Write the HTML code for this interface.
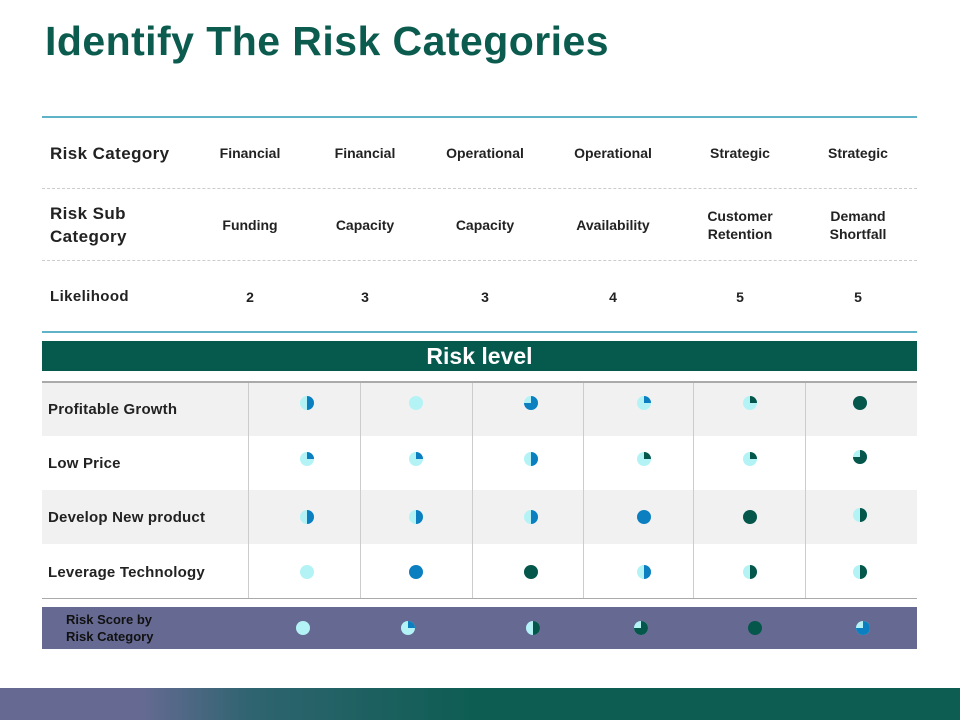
<!DOCTYPE html><html><head><style>
body{margin:0;width:960px;height:720px;position:relative;background:#fff;font-family:"Liberation Sans",sans-serif;overflow:hidden}
.a{position:absolute}
h1{position:absolute;left:45px;top:18px;margin:0;font-size:41px;color:#0b5c4f;font-weight:bold;letter-spacing:0.45px}
.hl{left:42px;width:875px}
.t{font-weight:bold;font-size:14px;color:#222;text-align:center;transform:translateX(-50%);white-space:nowrap;line-height:18px}
.lb{font-weight:bold;font-size:17px;color:#222;left:50px;line-height:23px;letter-spacing:0.4px}
.rl{font-weight:bold;font-size:15px;color:#222;left:48px;letter-spacing:0.2px}
</style></head><body>
<h1>Identify The Risk Categories</h1>
<div class="a hl" style="top:116px;height:2px;background:#5fb3c6"></div>
<div class="a hl" style="top:188px;border-top:1px dashed #ccc"></div>
<div class="a hl" style="top:260px;border-top:1px dashed #ccc"></div>
<div class="a hl" style="top:331px;height:2px;background:#5fb3c6"></div>
<div class="a lb" style="top:142px">Risk Category</div>
<div class="a lb" style="top:202px">Risk Sub<br>Category</div>
<div class="a lb" style="top:285px;font-size:15px">Likelihood</div>
<div class="a t" style="left:250px;top:144px">Financial</div>
<div class="a t" style="left:365px;top:144px">Financial</div>
<div class="a t" style="left:485px;top:144px">Operational</div>
<div class="a t" style="left:613px;top:144px">Operational</div>
<div class="a t" style="left:740px;top:144px">Strategic</div>
<div class="a t" style="left:858px;top:144px">Strategic</div>
<div class="a t" style="left:250px;top:216px">Funding</div>
<div class="a t" style="left:365px;top:216px">Capacity</div>
<div class="a t" style="left:485px;top:216px">Capacity</div>
<div class="a t" style="left:613px;top:216px">Availability</div>
<div class="a t" style="left:740px;top:207px">Customer<br>Retention</div>
<div class="a t" style="left:858px;top:207px">Demand<br>Shortfall</div>
<div class="a t" style="left:250px;top:288px">2</div>
<div class="a t" style="left:365px;top:288px">3</div>
<div class="a t" style="left:485px;top:288px">3</div>
<div class="a t" style="left:613px;top:288px">4</div>
<div class="a t" style="left:740px;top:288px">5</div>
<div class="a t" style="left:858px;top:288px">5</div>
<div class="a" style="left:42px;top:341px;width:875px;height:30px;background:#05594d;color:#fff;font-weight:bold;font-size:23px;text-align:center;line-height:31px">Risk level</div>
<div class="a hl" style="top:381px;height:2px;background:#aaa"></div>
<div class="a hl" style="top:383px;height:53px;background:#f1f1f1"></div>
<div class="a hl" style="top:490px;height:54px;background:#f1f1f1"></div>
<div class="a hl" style="top:598px;height:1px;background:#aaa"></div>
<div class="a" style="left:248px;top:383px;width:1px;height:215px;background:#ccc"></div>
<div class="a" style="left:360px;top:383px;width:1px;height:215px;background:#ccc"></div>
<div class="a" style="left:472px;top:383px;width:1px;height:215px;background:#ccc"></div>
<div class="a" style="left:583px;top:383px;width:1px;height:215px;background:#ccc"></div>
<div class="a" style="left:693px;top:383px;width:1px;height:215px;background:#ccc"></div>
<div class="a" style="left:805px;top:383px;width:1px;height:215px;background:#ccc"></div>
<div class="a rl" style="top:401px">Profitable Growth</div>
<div class="a rl" style="top:455px">Low Price</div>
<div class="a rl" style="top:509px">Develop New product</div>
<div class="a rl" style="top:564px">Leverage Technology</div>
<div class="a" style="left:42px;top:607px;width:875px;height:42px;background:#666a93"></div>
<div class="a" style="left:66px;top:611px;font-weight:bold;font-size:13px;color:#111;line-height:17px">Risk Score by<br>Risk Category</div>
<div class="a" style="left:0;top:688px;width:960px;height:32px;background:linear-gradient(90deg,#666a93 0,#666a93 140px,#2f6470 250px,#0d5d52 480px,#0d5d52 100%)"></div>
<svg class="a" style="left:0;top:0" width="960" height="720">
<g transform="translate(307,403)"><circle r="7" fill="#b3f3f5"/><path d="M0,0V-7A7,7 0 0 1 0,7Z" fill="#0b7fc0"/></g>
<g transform="translate(416,403)"><circle r="7" fill="#b3f3f5"/></g>
<g transform="translate(531,403)"><circle r="7" fill="#b3f3f5"/><path d="M0,0V-7A7,7 0 1 1 -7,0Z" fill="#0b7fc0"/></g>
<g transform="translate(644,403)"><circle r="7" fill="#b3f3f5"/><path d="M0,0V-7A7,7 0 0 1 7,0Z" fill="#0b7fc0"/></g>
<g transform="translate(750,403)"><circle r="7" fill="#b3f3f5"/><path d="M0,0V-7A7,7 0 0 1 7,0Z" fill="#05564b"/></g>
<g transform="translate(860,403)"><circle r="7" fill="#05564b"/></g>

<g transform="translate(307,459)"><circle r="7" fill="#b3f3f5"/><path d="M0,0V-7A7,7 0 0 1 7,0Z" fill="#0b7fc0"/></g>
<g transform="translate(416,459)"><circle r="7" fill="#b3f3f5"/><path d="M0,0V-7A7,7 0 0 1 7,0Z" fill="#0b7fc0"/></g>
<g transform="translate(531,459)"><circle r="7" fill="#b3f3f5"/><path d="M0,0V-7A7,7 0 0 1 0,7Z" fill="#0b7fc0"/></g>
<g transform="translate(644,459)"><circle r="7" fill="#b3f3f5"/><path d="M0,0V-7A7,7 0 0 1 7,0Z" fill="#05564b"/></g>
<g transform="translate(750,459)"><circle r="7" fill="#b3f3f5"/><path d="M0,0V-7A7,7 0 0 1 7,0Z" fill="#05564b"/></g>
<g transform="translate(860,457)"><circle r="7" fill="#b3f3f5"/><path d="M0,0V-7A7,7 0 1 1 -7,0Z" fill="#05564b"/></g>

<g transform="translate(307,517)"><circle r="7" fill="#b3f3f5"/><path d="M0,0V-7A7,7 0 0 1 0,7Z" fill="#0b7fc0"/></g>
<g transform="translate(416,517)"><circle r="7" fill="#b3f3f5"/><path d="M0,0V-7A7,7 0 0 1 0,7Z" fill="#0b7fc0"/></g>
<g transform="translate(531,517)"><circle r="7" fill="#b3f3f5"/><path d="M0,0V-7A7,7 0 0 1 0,7Z" fill="#0b7fc0"/></g>
<g transform="translate(644,517)"><circle r="7" fill="#0b7fc0"/></g>
<g transform="translate(750,517)"><circle r="7" fill="#05564b"/></g>
<g transform="translate(860,515)"><circle r="7" fill="#b3f3f5"/><path d="M0,0V-7A7,7 0 0 1 0,7Z" fill="#05564b"/></g>

<g transform="translate(307,572)"><circle r="7" fill="#b3f3f5"/></g>
<g transform="translate(416,572)"><circle r="7" fill="#0b7fc0"/></g>
<g transform="translate(531,572)"><circle r="7" fill="#05564b"/></g>
<g transform="translate(644,572)"><circle r="7" fill="#b3f3f5"/><path d="M0,0V-7A7,7 0 0 1 0,7Z" fill="#0b7fc0"/></g>
<g transform="translate(750,572)"><circle r="7" fill="#b3f3f5"/><path d="M0,0V-7A7,7 0 0 1 0,7Z" fill="#05564b"/></g>
<g transform="translate(860,572)"><circle r="7" fill="#b3f3f5"/><path d="M0,0V-7A7,7 0 0 1 0,7Z" fill="#05564b"/></g>

<g transform="translate(303,628)"><circle r="7" fill="#b3f3f5"/></g>
<g transform="translate(408,628)"><circle r="7" fill="#b3f3f5"/><path d="M0,0V-7A7,7 0 0 1 7,0Z" fill="#0b7fc0"/></g>
<g transform="translate(533,628)"><circle r="7" fill="#b3f3f5"/><path d="M0,0V-7A7,7 0 0 1 0,7Z" fill="#05564b"/></g>
<g transform="translate(641,628)"><circle r="7" fill="#b3f3f5"/><path d="M0,0V-7A7,7 0 1 1 -7,0Z" fill="#05564b"/></g>
<g transform="translate(755,628)"><circle r="7" fill="#05564b"/></g>
<g transform="translate(863,628)"><circle r="7" fill="#b3f3f5"/><path d="M0,0V-7A7,7 0 1 1 -7,0Z" fill="#0b7fc0"/></g>
</svg>
</body></html>
